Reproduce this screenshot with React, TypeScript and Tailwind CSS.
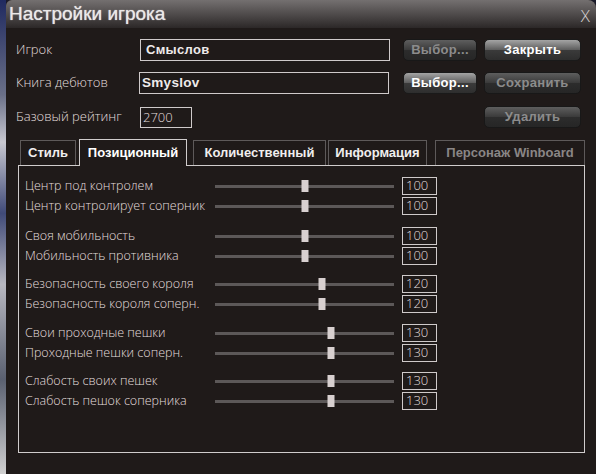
const ui = { fontFamily: '"Liberation Sans", Arial, sans-serif' };
const thin = { fontFamily: '"Open Sans", "Liberation Sans", sans-serif' };

type Row = { label: string; value: number };

const groups: { gap: string; rows: Row[] }[] = [
  {
    gap: 'mt-0',
    rows: [
      { label: 'Центр под контролем', value: 100 },
      { label: 'Центр контролирует соперник', value: 100 },
    ],
  },
  {
    gap: 'mt-[10px]',
    rows: [
      { label: 'Своя мобильность', value: 100 },
      { label: 'Мобильность противника', value: 100 },
    ],
  },
  {
    gap: 'mt-[8px]',
    rows: [
      { label: 'Безопасность своего короля', value: 120 },
      { label: 'Безопасность короля соперн.', value: 120 },
    ],
  },
  {
    gap: 'mt-[9px]',
    rows: [
      { label: 'Свои проходные пешки', value: 130 },
      { label: 'Проходные пешки соперн.', value: 130 },
    ],
  },
  {
    gap: 'mt-[8px]',
    rows: [
      { label: 'Слабость своих пешек', value: 130 },
      { label: 'Слабость пешок соперника', value: 130 },
    ],
  },
];

function Btn({ label, w, on }: { label: string; w: string; on?: boolean }) {
  return (
    <button
      style={ui}
      className={`${w} h-[22px] rounded-[5px] border text-[13px] font-bold tracking-[0.3px] ${
        on
          ? 'border-[#1a1a1a] bg-[linear-gradient(#a4a4a4,#5c5c5c_50%,#3a3a3a_52%,#2e2e2e)] text-white'
          : 'border-[#181818] bg-[linear-gradient(#5e5e5e,#3a3a3a_50%,#2c2c2c_52%,#262626)] text-[#8c8c8c]'
      }`}
    >
      {label}
    </button>
  );
}

function Slider({ row }: { row: Row }) {
  const left = (row.value / 200) * 179;
  return (
    <div className="flex h-[20px] items-center">
      <span style={thin} className="w-[190px] text-[12.5px] font-light text-[#e4dede]">
        {row.label}
      </span>
      <div className="relative h-[3px] w-[179px] bg-[#5c5858]">
        <div
          className="absolute top-[-5px] h-[12px] w-[7px] -translate-x-1/2 bg-[#d8d0d0]"
          style={{ left }}
        />
      </div>
      <div
        style={thin}
        className="ml-[8px] flex h-[18px] w-[35px] items-center border border-[#cfcaca] pl-[3px] text-[13px] font-light text-[#e4dede]"
      >
        {row.value}
      </div>
    </div>
  );
}

function Tab({ label, w, ml, active, off }: { label: string; w: string; ml: string; active?: boolean; off?: boolean }) {
  const color = off ? 'text-[#8a8686]' : active ? 'text-white' : 'text-[#f0eeee]';
  return (
    <div
      style={ui}
      className={`${w} ${ml} ${color} flex items-center justify-center border border-b-0 text-[13px] font-bold ${
        active ? 'relative z-10 h-[27px] border-[#d0cccc] bg-[#1f1a19]' : 'h-[25px] border-[#5e5a5a]'
      }`}
    >
      {label}
    </div>
  );
}

export default function App() {
  return (
    <div className="flex h-[474px] w-[596px] overflow-hidden bg-[#1a1a2a]">
      <div className="w-[6px] bg-[linear-gradient(#202a60,#6a7088_20%,#c8c8d0_30%,#404a78_45%,#b8b8c0_60%,#5a6070_80%,#d0d0d0)]" />
      <div className="flex flex-1 flex-col overflow-hidden rounded-tl-[6px] rounded-tr-[8px] bg-[#1f1a19]">
        <div className="relative flex h-[28px] shrink-0 items-center bg-[linear-gradient(#747070,#4c4848_55%,#2c2828)] pl-[3px]">
          <span style={ui} className="text-[19px] text-[#ebe8e8] [text-shadow:0_0_1px_#ddd]">
            Настройки игрока
          </span>
          <span style={thin} className="absolute right-[6px] top-[3px] text-[17px] font-light text-[#d8d4d4]">
            X
          </span>
        </div>

        <div className="flex flex-col pl-[10px]">
          <div className="mt-[11px] flex h-[22px] items-center">
            <span style={thin} className="w-[124px] text-[13px] font-light text-[#e4dede]">Игрок</span>
            <div style={ui} className="flex h-[22px] w-[250px] items-center border border-[#cfcaca] pl-[5px] text-[13px] font-bold tracking-[0.3px] text-[#eeeaea]">
              Смыслов
            </div>
            <div className="ml-[13px] flex gap-[7px]">
              <Btn label="Выбор..." w="w-[74px]" />
              <Btn label="Закрыть" w="w-[97px]" on />
            </div>
          </div>

          <div className="mt-[11px] flex h-[22px] items-center">
            <span style={thin} className="w-[123px] text-[13px] font-light text-[#e4dede]">Книга дебютов</span>
            <div style={ui} className="flex h-[22px] w-[250px] items-center border border-[#cfcaca] pl-[2px] text-[13.5px] font-bold tracking-[0.3px] text-[#eeeaea]">
              Smyslov
            </div>
            <div className="ml-[14px] flex gap-[7px]">
              <Btn label="Выбор..." w="w-[74px]" on />
              <Btn label="Сохранить" w="w-[97px]" />
            </div>
          </div>

          <div className="mt-[9px] flex h-[25px] items-end">
            <span style={thin} className="mb-[2px] w-[124px] text-[13px] font-light text-[#e4dede]">Базовый рейтинг</span>
            <div style={thin} className="flex h-[21px] w-[52px] items-center border border-[#cfcaca] pl-[2px] text-[13px] font-light text-[#e4dede]">
              2700
            </div>
            <div className="ml-[292px] self-start">
              <Btn label="Удалить" w="w-[97px]" />
            </div>
          </div>

          <div className="mt-[11px] ml-[2px] flex w-[567px] flex-col">
            <div className="flex items-end">
              <Tab label="Стиль" w="w-[56px]" ml="ml-[2px]" />
              <Tab label="Позиционный" w="w-[108px]" ml="ml-[3px] -mb-px" active />
              <Tab label="Количественный" w="w-[133px]" ml="ml-[6px]" />
              <Tab label="Информация" w="w-[99px]" ml="ml-[2px]" />
              <Tab label="Персонаж Winboard" w="w-[150px]" ml="ml-[8px]" off />
            </div>
            <div className="h-[288px] border border-[#d0cccc] pl-[6px] pt-[10px]">
              {groups.map((g, i) => (
                <div key={i} className={g.gap}>
                  {g.rows.map((r) => (
                    <Slider key={r.label} row={r} />
                  ))}
                </div>
              ))}
            </div>
          </div>
        </div>
      </div>
    </div>
  );
}
